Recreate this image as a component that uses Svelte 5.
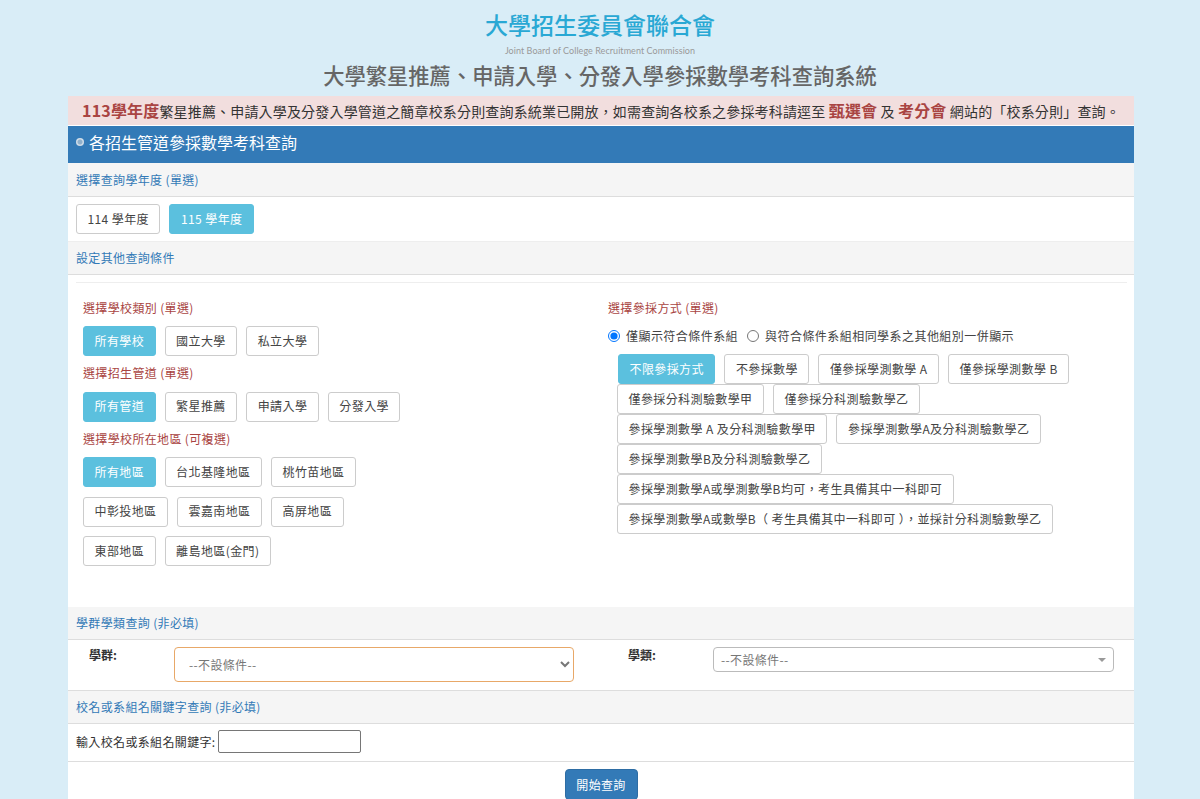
<script>
  const years = [
    { label: '114 學年度', on: false },
    { label: '115 學年度', on: true }
  ];
  const types = [
    { label: '所有學校', on: true },
    { label: '國立大學' },
    { label: '私立大學' }
  ];
  const channels = [
    { label: '所有管道', on: true },
    { label: '繁星推薦' },
    { label: '申請入學' },
    { label: '分發入學' }
  ];
  const areas = [
    { label: '所有地區', on: true },
    { label: '台北基隆地區' },
    { label: '桃竹苗地區' },
    { label: '中彰投地區' },
    { label: '雲嘉南地區' },
    { label: '高屏地區' },
    { label: '東部地區' },
    { label: '離島地區(金門)' }
  ];
  const modes = [
    [
      { label: '不限參採方式', on: true },
      { label: '不參採數學' },
      { label: '僅參採學測數學 A' },
      { label: '僅參採學測數學 B' }
    ],
    [{ label: '僅參採分科測驗數學甲' }, { label: '僅參採分科測驗數學乙' }],
    [{ label: '參採學測數學 A 及分科測驗數學甲' }, { label: '參採學測數學A及分科測驗數學乙' }],
    [{ label: '參採學測數學B及分科測驗數學乙' }],
    [{ label: '參採學測數學A或學測數學B均可，考生具備其中一科即可' }],
    [{ label: '參採學測數學A或數學B（ 考生具備其中一科即可 ），並採計分科測驗數學乙' }]
  ];
</script>

{#snippet btn(item)}
  <button type="button" class="btn" class:on={item.on}>{item.label}</button>
{/snippet}

<header class="top">
  <h1>大學招生委員會聯合會</h1>
  <p class="en">Joint Board of College Recruitment Commission</p>
  <h2>大學繁星推薦、申請入學、分發入學參採數學考科查詢系統</h2>
</header>

<main class="wrap">
  <div class="alert">
    <b class="year">113學年度</b>繁星推薦、申請入學及分發入學管道之簡章校系分則查詢系統業已開放，如需查詢各校系之參採考科請逕至
    <a href="#a">甄選會</a> 及 <a href="#b">考分會</a> 網站的「校系分則」查詢。
  </div>

  <div class="title"><span class="dot"></span>各招生管道參採數學考科查詢</div>

  <div class="head first">選擇查詢學年度 (單選)</div>
  <div class="row years">
    {#each years as y}{@render btn(y)}{/each}
  </div>

  <div class="head">設定其他查詢條件</div>
  <div class="filters">
    <hr />
    <div class="cols">
      <div class="left">
        <h4>選擇學校類別 (單選)</h4>
        <div class="row">{#each types as t}{@render btn(t)}{/each}</div>
        <h4>選擇招生管道 (單選)</h4>
        <div class="row">{#each channels as c}{@render btn(c)}{/each}</div>
        <h4>選擇學校所在地區 (可複選)</h4>
        <div class="row area">{#each areas as a}{@render btn(a)}{/each}</div>
      </div>
      <div class="right">
        <h4>選擇參採方式 (單選)</h4>
        <div class="radios">
          <label><input type="radio" name="show" checked />僅顯示符合條件系組</label>
          <label><input type="radio" name="show" />與符合條件系組相同學系之其他組別一併顯示</label>
        </div>
        <div class="modes">
          {#each modes as line}
            <div class="row">{#each line as m}{@render btn(m)}{/each}</div>
          {/each}
        </div>
      </div>
    </div>
  </div>

  <div class="head">學群學類查詢 (非必填)</div>
  <div class="pick">
    <div class="pick-l">
      <b>學群:</b>
      <select class="sel"><option>--不設條件--</option></select>
    </div>
    <div class="pick-r">
      <b>學類:</b>
      <div class="sel2">--不設條件--<i></i></div>
    </div>
  </div>

  <div class="head low">校名或系組名關鍵字查詢 (非必填)</div>
  <div class="kw">
    <label for="kw">輸入校名或系組名關鍵字:</label>
    <input id="kw" type="text" />
  </div>

  <div class="go"><button type="button" class="start">開始查詢</button></div>
</main>

<style>
  :global(body) {
    background: #d9edf7;
    font-family: "Noto Sans CJK TC", "Noto Sans", sans-serif;
    color: #333;
    font-size: 12px;
    letter-spacing: 0.35px;
  }

  * {
    box-sizing: border-box;
  }

  .top {
    height: 96px;
    text-align: center;
    padding-top: 8px;
    letter-spacing: 0;
  }

  h1 {
    margin: 0;
    font-size: 23px;
    line-height: 32px;
    font-weight: 500;
    color: #29a8d4;
  }

  .en {
    margin: 0;
    font-family: Lato, sans-serif;
    font-size: 9px;
    line-height: 21px;
    letter-spacing: 0.05px;
    color: #999;
  }

  h2 {
    margin: 0;
    font-size: 21.3px;
    line-height: 28px;
    font-weight: 500;
    color: #666;
  }

  .wrap {
    width: 1066px;
    margin-left: 68px;
    background: #fff;
  }

  .alert {
    height: 29px;
    line-height: 28px;
    background: #f2dede;
    text-align: center;
    font-size: 14px;
    letter-spacing: 0.17px;
    white-space: nowrap;
    color: #333;
  }

  .year {
    font-size: 16px;
    font-weight: 700;
    color: #a94442;
  }

  .alert a {
    font-size: 16px;
    font-weight: 700;
    color: #a94442;
    text-decoration: none;
  }

  .title {
    margin-top: 1px;
    height: 37px;
    background: #337ab7;
    color: #fff;
    font-size: 16px;
    letter-spacing: 0;
    display: flex;
    align-items: center;
    padding: 0 0 6px 8px;
    gap: 5px;
  }

  .dot {
    width: 8px;
    height: 8px;
    margin-top: 1px;
    border-radius: 50%;
    background: radial-gradient(circle, #8fb0cc 0 2px, #cfdce8 3px);
  }

  .head {
    height: 33px;
    line-height: 32px;
    padding-left: 8px;
    background: #f5f5f5;
    border-bottom: 1px solid #ddd;
    color: #337ab7;
    font-size: 12px;
  }

  .head.first {
    height: 34px;
    line-height: 33px;
  }

  .head.low {
    line-height: 31px;
  }

  .row {
    display: flex;
    flex-wrap: wrap;
    gap: 9.5px 9px;
  }

  .years {
    height: 45px;
    padding: 7px 0 0 8px;
    border-bottom: 1px solid #eee;
  }

  .btn {
    height: 30px;
    padding: 0 10.5px 2px;
    border: 1px solid #ccc;
    border-radius: 3px;
    background: #fff;
    color: #444;
    font: inherit;
    font-size: 12px;
    letter-spacing: 0.4px;
    white-space: nowrap;
  }

  .btn.on {
    background: #5bc0de;
    border-color: #5bc0de;
    color: #fff;
  }

  .filters {
    height: 332px;
    padding-top: 7px;
  }

  hr {
    margin: 0 7px 0 8px;
    border: 0;
    border-top: 1px solid #eee;
  }

  .cols {
    display: grid;
    grid-template-columns: 540px 1fr;
  }

  .left {
    padding-left: 15px;
  }

  h4 {
    margin: 0;
    height: 19px;
    line-height: 19px;
    font-size: 12px;
    font-weight: 400;
    color: #a94442;
  }

  .left h4 {
    margin-top: 7px;
    margin-bottom: 9.5px;
  }

  .left h4:first-child {
    margin-top: 14.5px;
  }

  .area {
    width: 320px;
  }

  .right h4 {
    margin-top: 15px;
  }

  .radios {
    display: flex;
    gap: 9px;
    margin-top: 8px;
    height: 21px;
    align-items: center;
    letter-spacing: 0.45px;
    color: #444;
  }

  .radios label {
    display: flex;
    align-items: center;
    gap: 6px;
  }

  .radios input {
    margin: 0;
    width: 12px;
    height: 12px;
  }

  .modes {
    margin-top: 8px;
    padding-left: 9px;
  }

  .modes .row {
    min-height: 30px;
  }

  .modes .btn.on {
    margin-left: 1px;
  }

  .pick {
    height: 51px;
    display: grid;
    grid-template-columns: 532px 1fr;
    border-bottom: 1px solid #ddd;
  }

  .pick-l,
  .pick-r {
    display: flex;
    align-items: flex-start;
    padding-top: 7px;
  }

  .pick b {
    font-weight: 700;
    margin-top: -1px;
    letter-spacing: 0;
  }

  .pick-l {
    padding-left: 21px;
  }

  .pick-l b {
    width: 85px;
  }

  .pick-r {
    padding-left: 28px;
  }

  .pick-r b {
    width: 85px;
  }

  .sel {
    width: 400px;
    height: 35px;
    padding: 0 10px;
    background: #fff;
    border: 1px solid #e8a868;
    border-radius: 4px;
    color: #777;
    font: inherit;
    font-size: 12px;
    letter-spacing: inherit;
  }

  .sel2 {
    position: relative;
    width: 401px;
    height: 25px;
    line-height: 23px;
    padding-left: 7px;
    border: 1px solid #bbb;
    border-radius: 4px;
    color: #777;
  }

  .sel2 i {
    position: absolute;
    right: 7px;
    top: 10px;
    border: 4px solid transparent;
    border-top: 4px solid #999;
    border-bottom: 0;
  }

  .kw {
    height: 38px;
    display: flex;
    align-items: center;
    padding: 0 0 2px 8px;
    gap: 2px;
    border-bottom: 1px solid #ddd;
  }

  .kw input {
    width: 143px;
    height: 23px;
    margin: 0;
    border: 1px solid #767676;
    border-radius: 2px;
    background: #fff;
  }

  .go {
    padding-top: 7px;
    text-align: center;
    height: 40px;
  }

  .start {
    width: 73px;
    height: 31px;
    padding-bottom: 2px;
    border: 1px solid #2e6da4;
    border-radius: 4px;
    background: #337ab7;
    color: #fff;
    font: inherit;
    font-size: 12px;
    letter-spacing: inherit;
  }
</style>
